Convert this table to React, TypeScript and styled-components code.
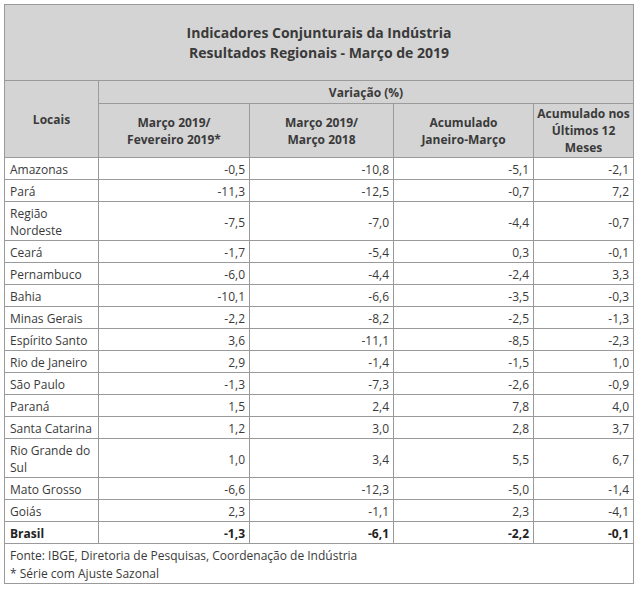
import React from "react";
import styled, { createGlobalStyle } from "styled-components";

const Global = createGlobalStyle`
  html, body { margin: 0; padding: 0; background: #fff; }
  body { font-family: "Open Sans", "Liberation Sans", sans-serif; color: #333; }
`;

const Wrap = styled.div`
  padding: 4px 0 0 4px;
`;

const Table = styled.table`
  border-collapse: collapse;
  width: 629px;
  table-layout: fixed;
  font-size: 12px;
  line-height: 17px;
  border: 1px solid #9a9a9a;
`;

const TitleCell = styled.th`
  background: #d4d4d4;
  color: #3a3a3a;
  font-size: 14px;
  line-height: 20px;
  font-weight: 700;
  text-align: center;
  height: 75px;
  padding: 0;
  border: 1px solid #9a9a9a;
`;

const HeadCell = styled.th<{ $h?: number }>`
  background: #d4d4d4;
  color: #3a3a3a;
  font-weight: 700;
  text-align: center;
  vertical-align: middle;
  padding: 0 3px;
  height: ${(p) => (p.$h ? `${p.$h}px` : "auto")};
  border: 1px solid #9a9a9a;
`;

const Cell = styled.td<{ $num?: boolean; $bold?: boolean }>`
  border: 1px solid #9a9a9a;
  padding: 3px 4px 1px 5px;
  text-align: ${(p) => (p.$num ? "right" : "left")};
  font-weight: ${(p) => (p.$bold ? 700 : 400)};
  color: ${(p) => (p.$bold ? "#222" : "#3a3a3a")};
  vertical-align: middle;
`;

const Footer = styled.td`
  border: 1px solid #9a9a9a;
  padding: 3px 5px 0;
  line-height: 18px;
  color: #3a3a3a;
`;

const rows: [string, string, string, string, string, boolean?][] = [
  ["Amazonas", "-0,5", "-10,8", "-5,1", "-2,1"],
  ["Pará", "-11,3", "-12,5", "-0,7", "7,2"],
  ["Região Nordeste", "-7,5", "-7,0", "-4,4", "-0,7"],
  ["Ceará", "-1,7", "-5,4", "0,3", "-0,1"],
  ["Pernambuco", "-6,0", "-4,4", "-2,4", "3,3"],
  ["Bahia", "-10,1", "-6,6", "-3,5", "-0,3"],
  ["Minas Gerais", "-2,2", "-8,2", "-2,5", "-1,3"],
  ["Espírito Santo", "3,6", "-11,1", "-8,5", "-2,3"],
  ["Rio de Janeiro", "2,9", "-1,4", "-1,5", "1,0"],
  ["São Paulo", "-1,3", "-7,3", "-2,6", "-0,9"],
  ["Paraná", "1,5", "2,4", "7,8", "4,0"],
  ["Santa Catarina", "1,2", "3,0", "2,8", "3,7"],
  ["Rio Grande do Sul", "1,0", "3,4", "5,5", "6,7"],
  ["Mato Grosso", "-6,6", "-12,3", "-5,0", "-1,4"],
  ["Goiás", "2,3", "-1,1", "2,3", "-4,1"],
  ["Brasil", "-1,3", "-6,1", "-2,2", "-0,1", true],
];

export default function App() {
  return (
    <Wrap>
      <Global />
      <Table>
        <colgroup>
          <col style={{ width: 94 }} />
          <col style={{ width: 151 }} />
          <col style={{ width: 144 }} />
          <col style={{ width: 140 }} />
          <col style={{ width: 100 }} />
        </colgroup>
        <thead>
          <tr>
            <TitleCell colSpan={5}>
              Indicadores Conjunturais da Indústria
              <br />
              Resultados Regionais - Março de 2019
            </TitleCell>
          </tr>
          <tr>
            <HeadCell rowSpan={2}>Locais</HeadCell>
            <HeadCell colSpan={4} $h={22}>
              Variação (%)
            </HeadCell>
          </tr>
          <tr>
            <HeadCell $h={53}>
              Março 2019/
              <br />
              Fevereiro 2019*
            </HeadCell>
            <HeadCell>
              Março 2019/
              <br />
              Março 2018
            </HeadCell>
            <HeadCell>
              Acumulado
              <br />
              Janeiro-Março
            </HeadCell>
            <HeadCell>
              Acumulado nos
              <br />
              Últimos 12
              <br />
              Meses
            </HeadCell>
          </tr>
        </thead>
        <tbody>
          {rows.map((r) => (
            <tr key={r[0]}>
              <Cell $bold={r[5]}>{r[0]}</Cell>
              <Cell $num $bold={r[5]}>{r[1]}</Cell>
              <Cell $num $bold={r[5]}>{r[2]}</Cell>
              <Cell $num $bold={r[5]}>{r[3]}</Cell>
              <Cell $num $bold={r[5]}>{r[4]}</Cell>
            </tr>
          ))}
          <tr>
            <Footer colSpan={5}>
              Fonte: IBGE, Diretoria de Pesquisas, Coordenação de Indústria
              <br />* Série com Ajuste Sazonal
            </Footer>
          </tr>
        </tbody>
      </Table>
    </Wrap>
  );
}
